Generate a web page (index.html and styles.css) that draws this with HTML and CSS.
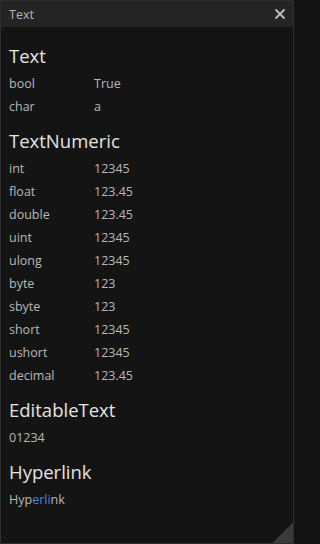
FILE: index.html
```html
<!DOCTYPE html>
<html>
<head>
<meta charset="utf-8">
<link rel="stylesheet" href="styles.css">
</head>
<body>
<div class="window">
  <div class="titlebar">
    <span class="title">Text</span>
    <svg class="close" width="12" height="12" viewBox="0 0 12 12"><path d="M1.5 1.5 L10.5 10.5 M10.5 1.5 L1.5 10.5" stroke="#bdbdbd" stroke-width="1.8" fill="none"/></svg>
  </div>
  <div class="content">
    <section class="section">
      <h2 class="heading">Text</h2>
      <div class="row"><span class="label">bool</span><span class="value">True</span></div>
      <div class="row"><span class="label">char</span><span class="value">a</span></div>
    </section>
    <section class="section">
      <h2 class="heading">TextNumeric</h2>
      <div class="row"><span class="label">int</span><span class="value">12345</span></div>
      <div class="row"><span class="label">float</span><span class="value">123.45</span></div>
      <div class="row"><span class="label">double</span><span class="value">123.45</span></div>
      <div class="row"><span class="label">uint</span><span class="value">12345</span></div>
      <div class="row"><span class="label">ulong</span><span class="value">12345</span></div>
      <div class="row"><span class="label">byte</span><span class="value">123</span></div>
      <div class="row"><span class="label">sbyte</span><span class="value">123</span></div>
      <div class="row"><span class="label">short</span><span class="value">12345</span></div>
      <div class="row"><span class="label">ushort</span><span class="value">12345</span></div>
      <div class="row"><span class="label">decimal</span><span class="value">123.45</span></div>
    </section>
    <section class="section">
      <h2 class="heading">EditableText</h2>
      <div class="row"><span class="label">01234</span></div>
    </section>
    <section class="section">
      <h2 class="heading">Hyperlink</h2>
      <div class="row"><span class="label">Hyp<span class="link">erli</span>nk</span></div>
    </section>
  </div>
  <div class="grip"></div>
</div>
</body>
</html>
```

FILE: styles.css
```css
html, body {
  margin: 0;
  padding: 0;
  background: #141414;
}
body {
  font-family: "Open Sans", "Noto Sans", sans-serif;
}
.window {
  position: relative;
  width: 294px;
  height: 544px;
  box-sizing: border-box;
  border: 1px solid #2e2e2e;
  background: #141414;
  overflow: hidden;
}
.titlebar {
  height: 26px;
  background: #242424;
  display: flex;
  align-items: center;
  justify-content: space-between;
  padding: 0 8px 0 8px;
}
.title {
  color: #b4b4b4;
  font-size: 12.5px;
}
.close {
  display: block;
  margin-right: -1px;
}
.content {
  padding: 13px 8px 0 8px;
}
.section {
  margin-bottom: 7px;
}
.heading {
  margin: 0;
  font-weight: normal;
  font-size: 18.5px;
  line-height: 31px;
  padding-bottom: 1px;
  color: #e3e3e3;
}
.row {
  display: flex;
  height: 23px;
  line-height: 23px;
  font-size: 12.5px;
  color: #b8b8b8;
}
.label {
  width: 85px;
}
.link {
  color: #4a7ff0;
}
.grip {
  position: absolute;
  right: 0;
  bottom: 0;
  width: 20px;
  height: 20px;
  background: linear-gradient(135deg, transparent 50%, #3a3a3a 50%);
}
```
